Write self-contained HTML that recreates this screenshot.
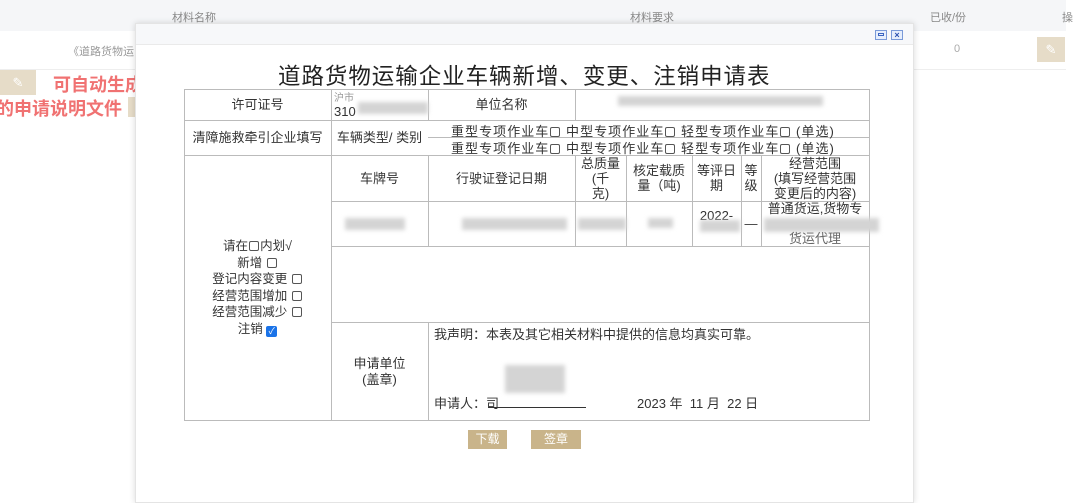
<!DOCTYPE html>
<html><head><meta charset="utf-8">
<style>
*{margin:0;padding:0;box-sizing:border-box}
body{width:1080px;height:497px;overflow:hidden;background:#fff;position:relative;font-family:"Liberation Sans","Noto Sans CJK SC",sans-serif;color:#333}
.a{position:absolute;white-space:nowrap}
.h{position:absolute;background:#bbb;height:1px}
.v{position:absolute;background:#bbb;width:1px}
.t{position:absolute;font-size:13px;color:#333;text-align:center;line-height:15px}
.blur{position:absolute;background:#d4d4d4;filter:blur(2px)}
.btn{position:absolute;background:#c9b48a;color:#fff;font-size:12px;text-align:center;line-height:19px}
.cb{display:inline-block;width:10px;height:10px;border:1px solid #555;border-radius:2px;vertical-align:-1px;margin:0 1px}
</style></head><body>
<div class="a" style="left:0;top:0;width:1066px;height:31px;background:#f5f6f8"></div>
<div class="a" style="left:172px;top:9px;font-size:11px;color:#888">材料名称</div>
<div class="a" style="left:630px;top:9px;font-size:11px;color:#888">材料要求</div>
<div class="a" style="left:930px;top:9px;font-size:11px;color:#888">已收/份</div>
<div class="a" style="left:1062px;top:9px;font-size:11px;color:#888">操</div>
<div class="a" style="left:0;top:69px;width:1066px;height:1px;background:#eee"></div>
<div class="a" style="left:68px;top:43px;font-size:11px;color:#999">《道路货物运</div>
<div class="a" style="left:954px;top:43px;font-size:11px;color:#aaa">0</div>
<div class="a" style="left:1037px;top:37px;width:28px;height:25px;background:#e6dcc8;color:#fff;font-size:13px;text-align:center;line-height:25px">✎</div>
<div class="a" style="left:0;top:70px;width:36px;height:25px;background:#e6dcc8;color:#fff;font-size:13px;text-align:center;line-height:25px">✎</div>
<div class="a" style="left:53px;top:71px;font-size:18px;font-weight:bold;color:#f07272">可自动生成</div>
<div class="a" style="left:-4px;top:95px;font-size:18px;font-weight:bold;color:#f07272">的申请说明文件</div>
<div class="a" style="left:128px;top:97px;width:10px;height:20px;background:#e6dcc8"></div>
<div class="a" style="left:135px;top:23px;width:779px;height:480px;background:#fff;box-shadow:0 0 6px rgba(0,0,0,.15);border:1px solid #e4e4e4"></div>
<div class="a" style="left:136px;top:24px;width:777px;height:21px;background:#f7f8fa;border-bottom:1px solid #eaeaea"></div>
<div class="a" style="left:875px;top:30px;width:12px;height:10px;border:1px solid #7a9ad8;background:#e6eefc"><div style="margin:2px 2px;height:3px;border:1px solid #3a64c0"></div></div>
<div class="a" style="left:891px;top:30px;width:12px;height:10px;border:1px solid #7a9ad8;background:#e6eefc;font-size:9px;line-height:8px;text-align:center;color:#2a50b0;font-weight:bold">×</div>
<div class="a" style="left:278px;top:59px;font-size:22.5px;color:#222;letter-spacing:0.95px">道路货物运输企业车辆新增、变更、注销申请表</div>
<div class="h" style="left:184px;top:89px;width:686px"></div>
<div class="h" style="left:184px;top:120px;width:686px"></div>
<div class="h" style="left:428px;top:137px;width:442px"></div>
<div class="h" style="left:184px;top:155px;width:686px"></div>
<div class="h" style="left:331px;top:201px;width:539px"></div>
<div class="h" style="left:331px;top:246px;width:539px"></div>
<div class="h" style="left:331px;top:322px;width:539px"></div>
<div class="h" style="left:184px;top:420px;width:686px"></div>
<div class="v" style="left:184px;top:89px;height:332px"></div>
<div class="v" style="left:869px;top:89px;height:332px"></div>
<div class="v" style="left:331px;top:89px;height:332px"></div>
<div class="v" style="left:428px;top:89px;height:31px"></div>
<div class="v" style="left:575px;top:89px;height:31px"></div>
<div class="v" style="left:428px;top:155px;height:91px"></div>
<div class="v" style="left:428px;top:322px;height:98px"></div>
<div class="v" style="left:575px;top:155px;height:91px"></div>
<div class="v" style="left:626px;top:155px;height:91px"></div>
<div class="v" style="left:692px;top:155px;height:91px"></div>
<div class="v" style="left:741px;top:155px;height:91px"></div>
<div class="v" style="left:761px;top:155px;height:91px"></div>
<div class="t" style="left:184px;top:97px;width:147px">许可证号</div>
<div class="a" style="left:334px;top:89px;font-size:10px;color:#999">沪市</div>
<div class="a" style="left:334px;top:104px;font-size:13px">310</div>
<div class="blur" style="left:358px;top:102px;width:70px;height:12px"></div>
<div class="t" style="left:428px;top:97px;width:147px">单位名称</div>
<div class="blur" style="left:618px;top:96px;width:205px;height:10px"></div>
<div class="t" style="left:184px;top:130px;width:147px">清障施救牵引企业填写</div>
<div class="t" style="left:331px;top:130px;width:97px">车辆类型/ 类别</div>
<div class="a" style="left:451px;top:121px;font-size:13px;letter-spacing:1.05px">重型专项作业车<span class="cb"></span> 中型专项作业车<span class="cb"></span> 轻型专项作业车<span class="cb"></span> (单选)</div>
<div class="a" style="left:451px;top:138px;font-size:13px;letter-spacing:1.05px">重型专项作业车<span class="cb"></span> 中型专项作业车<span class="cb"></span> 轻型专项作业车<span class="cb"></span> (单选)</div>
<div class="t" style="left:331px;top:171px;width:97px">车牌号</div>
<div class="t" style="left:428px;top:171px;width:147px">行驶证登记日期</div>
<div class="t" style="left:575px;top:156px;width:51px">总质量<br>(千<br>克)</div>
<div class="t" style="left:626px;top:163px;width:66px">核定载质<br>量（吨)</div>
<div class="t" style="left:692px;top:163px;width:49px">等评日<br>期</div>
<div class="t" style="left:741px;top:163px;width:20px">等<br>级</div>
<div class="t" style="left:761px;top:156px;width:108px">经营范围<br>(填写经营范围<br>变更后的内容)</div>
<div class="blur" style="left:345px;top:218px;width:60px;height:12px"></div>
<div class="blur" style="left:462px;top:218px;width:105px;height:12px"></div>
<div class="blur" style="left:578px;top:218px;width:48px;height:12px"></div>
<div class="blur" style="left:648px;top:218px;width:25px;height:10px"></div>
<div class="t" style="left:692px;top:208px;width:49px">2022-</div>
<div class="blur" style="left:700px;top:220px;width:40px;height:12px"></div>
<div class="t" style="left:741px;top:216px;width:20px">—</div>
<div class="t" style="left:761px;top:201px;width:108px">普通货运,货物专</div>
<div class="blur" style="left:764px;top:218px;width:115px;height:14px"></div>
<div class="t" style="left:761px;top:231px;width:108px;color:#666">货运代理</div>
<div class="t" style="left:184px;top:238px;width:147px;line-height:16.6px;font-size:12.5px">请在<span class="cb"></span>内划√<br>新增 <span class="cb"></span><br>登记内容变更 <span class="cb"></span><br>经营范围增加 <span class="cb"></span><br>经营范围减少 <span class="cb"></span><br>注销 <span style="display:inline-block;width:11px;height:11px;background:#1a73e8;border-radius:2px;color:#fff;font-size:9px;line-height:11px;vertical-align:-1px">✓</span></div>
<div class="t" style="left:331px;top:356px;width:97px;line-height:16px">申请单位<br>(盖章)</div>
<div class="a" style="left:434px;top:324px;font-size:13px">我声明：本表及其它相关材料中提供的信息均真实可靠。</div>
<div class="blur" style="left:505px;top:365px;width:60px;height:28px"></div>
<div class="a" style="left:434px;top:393px;font-size:13px">申请人：司</div>
<div class="a" style="left:488px;top:407px;width:98px;height:1px;background:#333"></div>
<div class="a" style="left:637px;top:393px;font-size:13px">2023 年&nbsp; 11 月&nbsp; 22 日</div>
<div class="btn" style="left:468px;top:430px;width:39px">下载</div>
<div class="btn" style="left:531px;top:430px;width:50px">签章</div>
</body></html>
